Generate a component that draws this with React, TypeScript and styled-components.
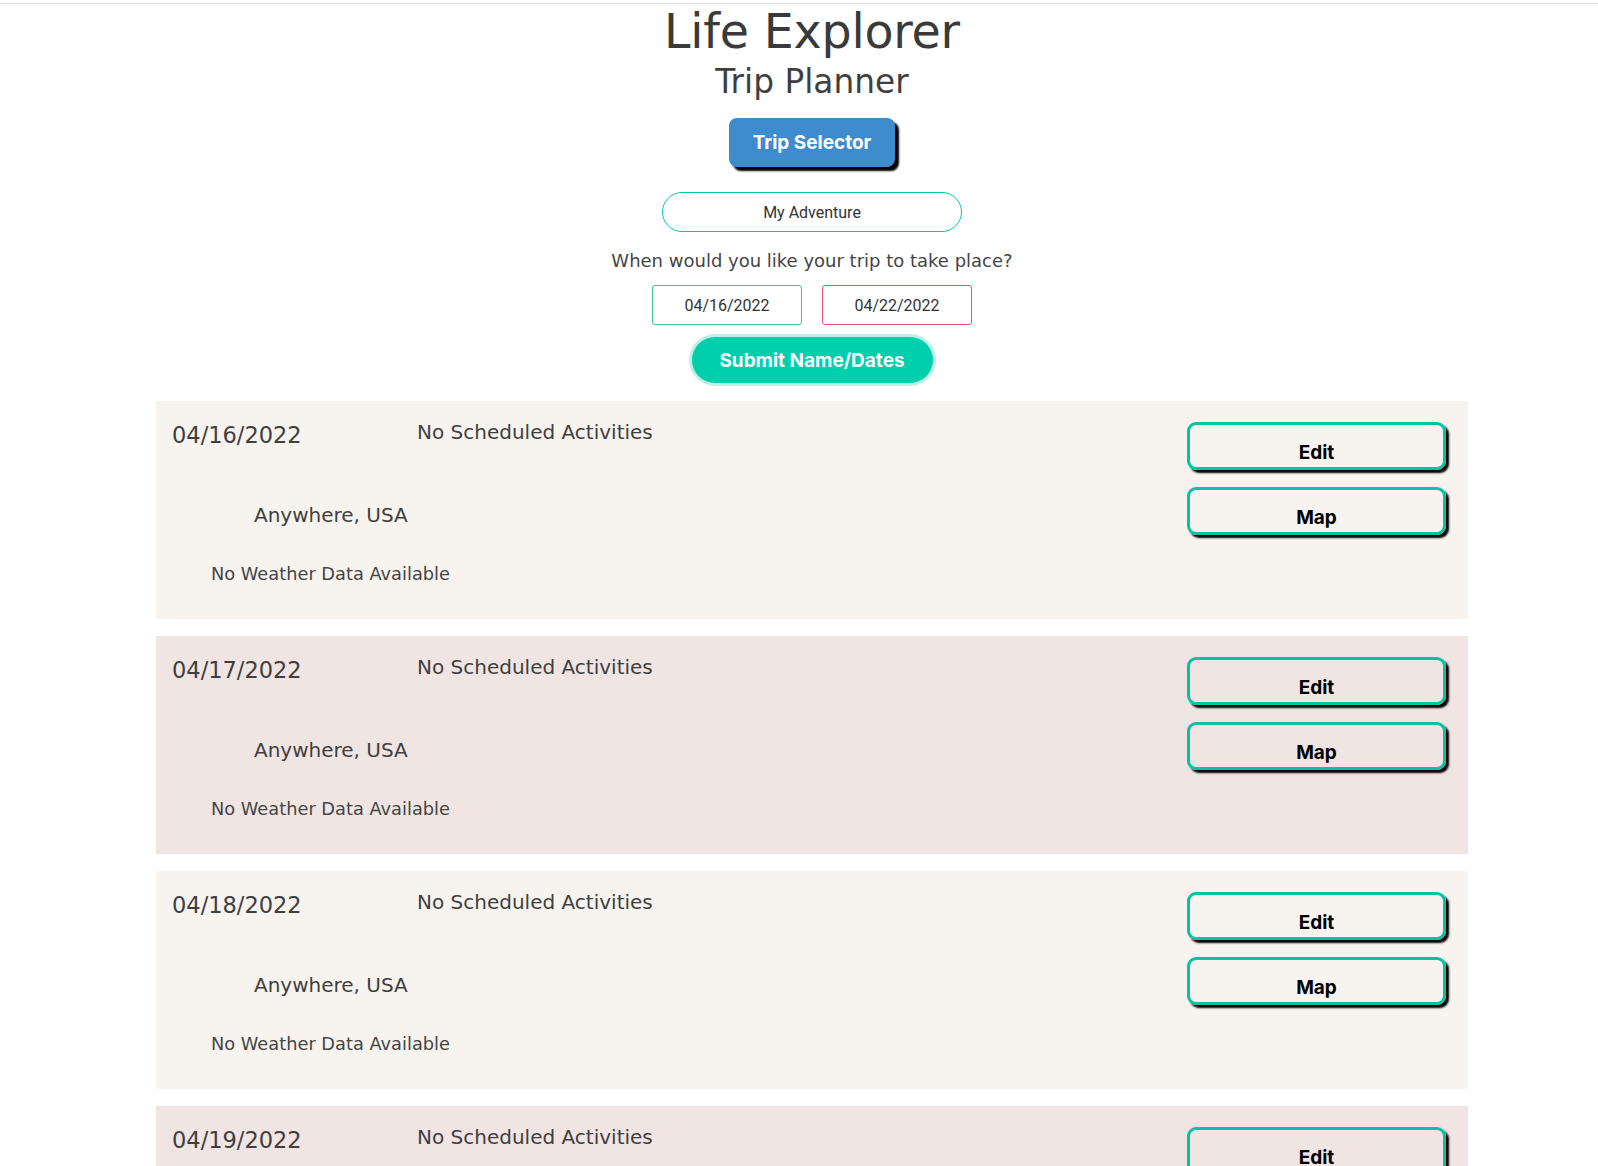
import React from "react";
import styled, { createGlobalStyle } from "styled-components";

const GlobalStyle = createGlobalStyle`
  html, body {
    margin: 0;
    padding: 0;
    background: #ffffff;
  }
  body {
    font-family: "DejaVu Sans", "Open Sans", sans-serif;
    color: #3d3d3d;
  }
  * { box-sizing: border-box; }
`;

const Page = styled.div`
  margin-top: 3px;
  border-top: 1px solid #dcdcdc;
  padding: 0 130px 40px 156px;
`;

const Header = styled.header`
  display: flex;
  flex-direction: column;
  align-items: center;
`;

const Title = styled.h1`
  margin: 3px 0 0;
  font-family: "DejaVu Sans", sans-serif;
  font-weight: 400;
  font-size: 47.5px;
  line-height: 50px;
  color: #3a3a3a;
  letter-spacing: -0.2px;
`;

const Subtitle = styled.h2`
  margin: 5px 0 0;
  font-family: "DejaVu Sans", sans-serif;
  font-weight: 400;
  font-size: 32.8px;
  line-height: 40px;
  color: #3f3f3f;
`;

const SelectorButton = styled.button`
  margin-top: 16px;
  width: 166px;
  height: 49px;
  border: none;
  border-radius: 8px;
  background: #3e8bcd;
  color: #ffffff;
  font-family: Inter, "Liberation Sans", sans-serif;
  font-weight: 700;
  font-size: 19px;
  box-shadow: 4px 4px 2px #000000;
  cursor: pointer;
`;

const NameInput = styled.div`
  margin-top: 25px;
  width: 300px;
  height: 40px;
  border: 1px solid #00c9a7;
  border-radius: 20px;
  display: flex;
  align-items: center;
  justify-content: center;
  font-family: Roboto, Inter, sans-serif;
  font-size: 16px;
  color: #333333;
`;

const Question = styled.p`
  margin: 19px 0 0;
  font-family: "DejaVu Sans", sans-serif;
  font-size: 18px;
  line-height: 20px;
  color: #454545;
`;

const DateRow = styled.div`
  margin-top: 14px;
  display: flex;
  gap: 20px;
`;

const DateBox = styled.div<{ $tone: "start" | "end" }>`
  width: 150px;
  height: 40px;
  border: 1px solid ${(p) => (p.$tone === "start" ? "#3dc28a" : "#e8526c")};
  border-radius: 3px;
  display: flex;
  align-items: center;
  justify-content: center;
  font-family: Roboto, Inter, sans-serif;
  font-size: 16px;
  color: #333333;
`;

const SubmitButton = styled.button`
  margin-top: 12px;
  width: 241px;
  height: 46px;
  border: none;
  border-radius: 23px;
  background: #00cfae;
  color: #ffffff;
  font-family: Inter, "Liberation Sans", sans-serif;
  font-weight: 700;
  font-size: 19px;
  box-shadow: 0 0 0 3px #bdefe4;
  cursor: pointer;
`;

const DayList = styled.section`
  margin-top: 18px;
  display: flex;
  flex-direction: column;
  gap: 17px;
`;

const DayCard = styled.article<{ $alt: boolean }>`
  height: 218px;
  background: ${(p) => (p.$alt ? "#f0e5e3" : "#f7f4f0")};
  padding: 20px 22px 0 16px;
  display: flex;
  justify-content: space-between;
  align-items: flex-start;
`;

const Info = styled.div`
  display: flex;
  flex-direction: column;
`;

const TopRow = styled.div`
  display: flex;
  align-items: flex-start;
`;

const DayDate = styled.div`
  width: 245px;
  font-size: 22.5px;
  line-height: 28px;
  color: #3f3f3f;
`;

const Activities = styled.div`
  margin-top: -1px;
  font-size: 20px;
  line-height: 24px;
  color: #3f3f3f;
`;

const Location = styled.div`
  margin: 54px 0 0 82px;
  font-size: 20px;
  line-height: 24px;
  color: #3f3f3f;
`;

const Weather = styled.div`
  margin: 36px 0 0 39px;
  font-size: 17.8px;
  line-height: 22px;
  color: #454545;
`;

const Actions = styled.div`
  margin-top: 1px;
  display: flex;
  flex-direction: column;
  gap: 17px;
`;

const ActionButton = styled.button`
  width: 259px;
  height: 48px;
  padding: 12px 0 0;
  border: 3px solid #00c4a4;
  border-radius: 9px;
  background: transparent;
  color: #000000;
  font-family: Inter, "Liberation Sans", sans-serif;
  font-weight: 700;
  font-size: 19px;
  box-shadow: 3px 3px 2px #000000;
  display: flex;
  align-items: center;
  justify-content: center;
  cursor: pointer;
`;

const days = ["04/16/2022", "04/17/2022", "04/18/2022", "04/19/2022"];

export default function App() {
  return (
    <>
      <GlobalStyle />
      <Page>
        <Header>
          <Title>Life Explorer</Title>
          <Subtitle>Trip Planner</Subtitle>
          <SelectorButton>Trip Selector</SelectorButton>
          <NameInput>My Adventure</NameInput>
          <Question>When would you like your trip to take place?</Question>
          <DateRow>
            <DateBox $tone="start">04/16/2022</DateBox>
            <DateBox $tone="end">04/22/2022</DateBox>
          </DateRow>
          <SubmitButton>Submit Name/Dates</SubmitButton>
        </Header>
        <DayList>
          {days.map((d, i) => (
            <DayCard key={d} $alt={i % 2 === 1}>
              <Info>
                <TopRow>
                  <DayDate>{d}</DayDate>
                  <Activities>No Scheduled Activities</Activities>
                </TopRow>
                <Location>Anywhere, USA</Location>
                <Weather>No Weather Data Available</Weather>
              </Info>
              <Actions>
                <ActionButton>Edit</ActionButton>
                <ActionButton>Map</ActionButton>
              </Actions>
            </DayCard>
          ))}
        </DayList>
      </Page>
    </>
  );
}
